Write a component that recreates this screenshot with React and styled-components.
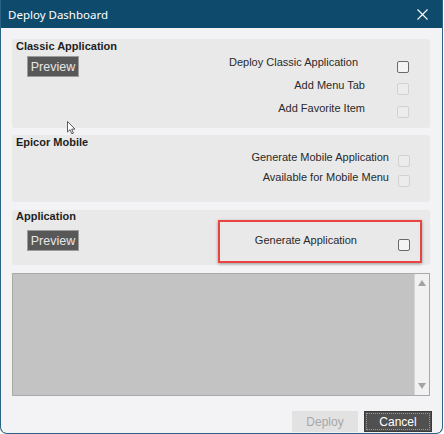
import React from "react";
import styled, { createGlobalStyle } from "styled-components";

const Global = createGlobalStyle`
  html, body { margin: 0; padding: 0; background: #ffffff; }
  body { font-family: "Liberation Sans", Arial, sans-serif; }
`;

const Window = styled.div`
  position: relative;
  width: 441px;
  border: 1px solid #2b6384;
  border-top: none;
  border-radius: 0 0 7px 7px;
  background: #f3f3f5;
  display: flex;
  flex-direction: column;
  overflow: hidden;
`;

const TitleBar = styled.div`
  height: 28px;
  background: #0e4a6b;
  display: flex;
  align-items: center;
  justify-content: space-between;
  padding: 0 14px 0 7px;
  color: #ffffff;
  font-family: "Noto Sans", "Open Sans", sans-serif;
  font-size: 11.5px;
`;

const CloseIcon = styled.svg`
  width: 11px;
  height: 11px;
  display: block;
`;

const Body = styled.div`
  display: flex;
  flex-direction: column;
  padding: 11px 12px 1px 11px;
`;

const Section = styled.div`
  height: ${(p) => p.$h}px;
  margin-top: ${(p) => p.$mt || 0}px;
  background: #e9e9e9;
  border-radius: 3px;
  display: flex;
  justify-content: space-between;
  color: #222;
`;

const LeftCol = styled.div`
  display: flex;
  flex-direction: column;
  align-items: flex-start;
  padding: ${(p) => p.$pt}px 0 0 4px;
`;

const SectionTitle = styled.div`
  font-size: 11px;
  font-weight: bold;
  line-height: 13px;
  color: #1e1e1e;
`;

const PreviewButton = styled.button`
  margin: ${(p) => p.$mt}px 0 0 11px;
  width: 52px;
  height: 21px;
  padding: 0;
  background: #585858;
  border: 1px solid #9c9c9c;
  color: #e6e6e6;
  font-family: "Liberation Sans", Arial, sans-serif;
  font-size: 12.5px;
`;

const RightCol = styled.div`
  display: flex;
  flex-direction: column;
  align-items: flex-end;
  padding: ${(p) => p.$pt}px ${(p) => p.$pr}px 0 0;
`;

const OptionRow = styled.div`
  height: ${(p) => p.$h}px;
  display: flex;
  align-items: flex-start;
`;

const OptionLabel = styled.span`
  font-size: 11px;
  line-height: 13px;
  color: #2a2a2a;
  margin-right: ${(p) => p.$gap}px;
`;

const Check = styled.span`
  margin-top: ${(p) => p.$mt}px;
  width: 10px;
  height: 10px;
  border-radius: 2px;
  border: ${(p) => (p.$active ? "1.5px solid #6a6a6a" : "1px solid #d2d2d2")};
  background: ${(p) => (p.$active ? "#f4f4f4" : "#ececec")};
  display: block;
`;

const Highlight = styled.div`
  width: 204px;
  height: 43px;
  border: 2px solid #ea4343;
  box-shadow: 0 1px 3px rgba(0, 0, 0, 0.35);
  display: flex;
  justify-content: flex-end;
  align-items: flex-start;
  padding: 12px 10px 0 0;
  box-sizing: border-box;
  margin-right: 8px;
`;

const TextArea = styled.div`
  margin-top: 8px;
  height: 123px;
  box-sizing: border-box;
  background: #c3c3c3;
  border: 1px solid #a9a9a9;
  display: flex;
  justify-content: flex-end;
`;

const ScrollBar = styled.div`
  width: 14px;
  background: #f1f1f1;
  border-left: 1px solid #d6d6d6;
  display: flex;
  flex-direction: column;
  justify-content: space-between;
  align-items: center;
  padding: 6px 0 6px;
`;

const Arrow = styled.span`
  width: 0;
  height: 0;
  border-left: 4px solid transparent;
  border-right: 4px solid transparent;
  ${(p) =>
    p.$up
      ? "border-bottom: 6px solid #a3a3a3;"
      : "border-top: 6px solid #a3a3a3;"}
`;

const Footer = styled.div`
  margin-top: 15px;
  display: flex;
  justify-content: flex-end;
  gap: 6px;
  margin-right: -2px;
`;

const FooterButton = styled.button`
  width: ${(p) => p.$w}px;
  height: 21px;
  padding: 0;
  font-family: "Liberation Sans", Arial, sans-serif;
  font-size: 12px;
  background: ${(p) => (p.$primary ? "#505050" : "#e2e2e2")};
  color: ${(p) => (p.$primary ? "#ffffff" : "#a8a8a8")};
  border: 1px solid ${(p) => (p.$primary ? "#3a3a3a" : "#e2e2e2")};
  outline: ${(p) => (p.$primary ? "1px dotted #9a9a9a" : "none")};
  outline-offset: -3px;
`;

const Cursor = styled.svg`
  position: absolute;
  left: 66px;
  top: 121px;
  width: 10px;
  height: 14px;
`;

export default function App() {
  return (
    <>
      <Global />
      <Window>
        <TitleBar>
          <span>Deploy Dashboard</span>
          <CloseIcon viewBox="0 0 11 11">
            <path d="M0.5 0.5 L10.5 10.5 M10.5 0.5 L0.5 10.5" stroke="#ffffff" strokeWidth="1.1" />
          </CloseIcon>
        </TitleBar>
        <Body>
          <Section $h={89}>
            <LeftCol $pt={1}>
              <SectionTitle>Classic Application</SectionTitle>
              <PreviewButton $mt={3}>Preview</PreviewButton>
            </LeftCol>
            <RightCol $pt={17} $pr={21}>
              <OptionRow $h={23}>
                <OptionLabel $gap={39}>Deploy Classic Application</OptionLabel>
                <Check $active $mt={5} />
              </OptionRow>
              <OptionRow $h={23}>
                <OptionLabel $gap={32}>Add Menu Tab</OptionLabel>
                <Check $mt={4} />
              </OptionRow>
              <OptionRow $h={23}>
                <OptionLabel $gap={32}>Add Favorite Item</OptionLabel>
                <Check $mt={4} />
              </OptionRow>
            </RightCol>
          </Section>
          <Section $h={67} $mt={7}>
            <LeftCol $pt={1}>
              <SectionTitle>Epicor Mobile</SectionTitle>
            </LeftCol>
            <RightCol $pt={16} $pr={20}>
              <OptionRow $h={20}>
                <OptionLabel $gap={9}>Generate Mobile Application</OptionLabel>
                <Check $mt={4} />
              </OptionRow>
              <OptionRow $h={20}>
                <OptionLabel $gap={9}>Available for Mobile Menu</OptionLabel>
                <Check $mt={4} />
              </OptionRow>
            </RightCol>
          </Section>
          <Section $h={55} $mt={8}>
            <LeftCol $pt={0}>
              <SectionTitle>Application</SectionTitle>
              <PreviewButton $mt={7}>Preview</PreviewButton>
            </LeftCol>
            <RightCol $pt={10} $pr={0}>
              <Highlight>
                <OptionLabel $gap={41}>Generate Application</OptionLabel>
                <Check $active $mt={5} />
              </Highlight>
            </RightCol>
          </Section>
          <TextArea>
            <ScrollBar>
              <Arrow $up />
              <Arrow />
            </ScrollBar>
          </TextArea>
          <Footer>
            <FooterButton $w={66}>Deploy</FooterButton>
            <FooterButton $w={68} $primary>Cancel</FooterButton>
          </Footer>
        </Body>
        <Cursor viewBox="0 0 10 14">
          <path d="M0.5 0.5 L0.5 11 L3 8.6 L4.8 12.8 L6.4 12.1 L4.7 8.1 L8 8.1 Z" fill="#ffffff" stroke="#333" strokeWidth="0.8" />
        </Cursor>
      </Window>
    </>
  );
}
